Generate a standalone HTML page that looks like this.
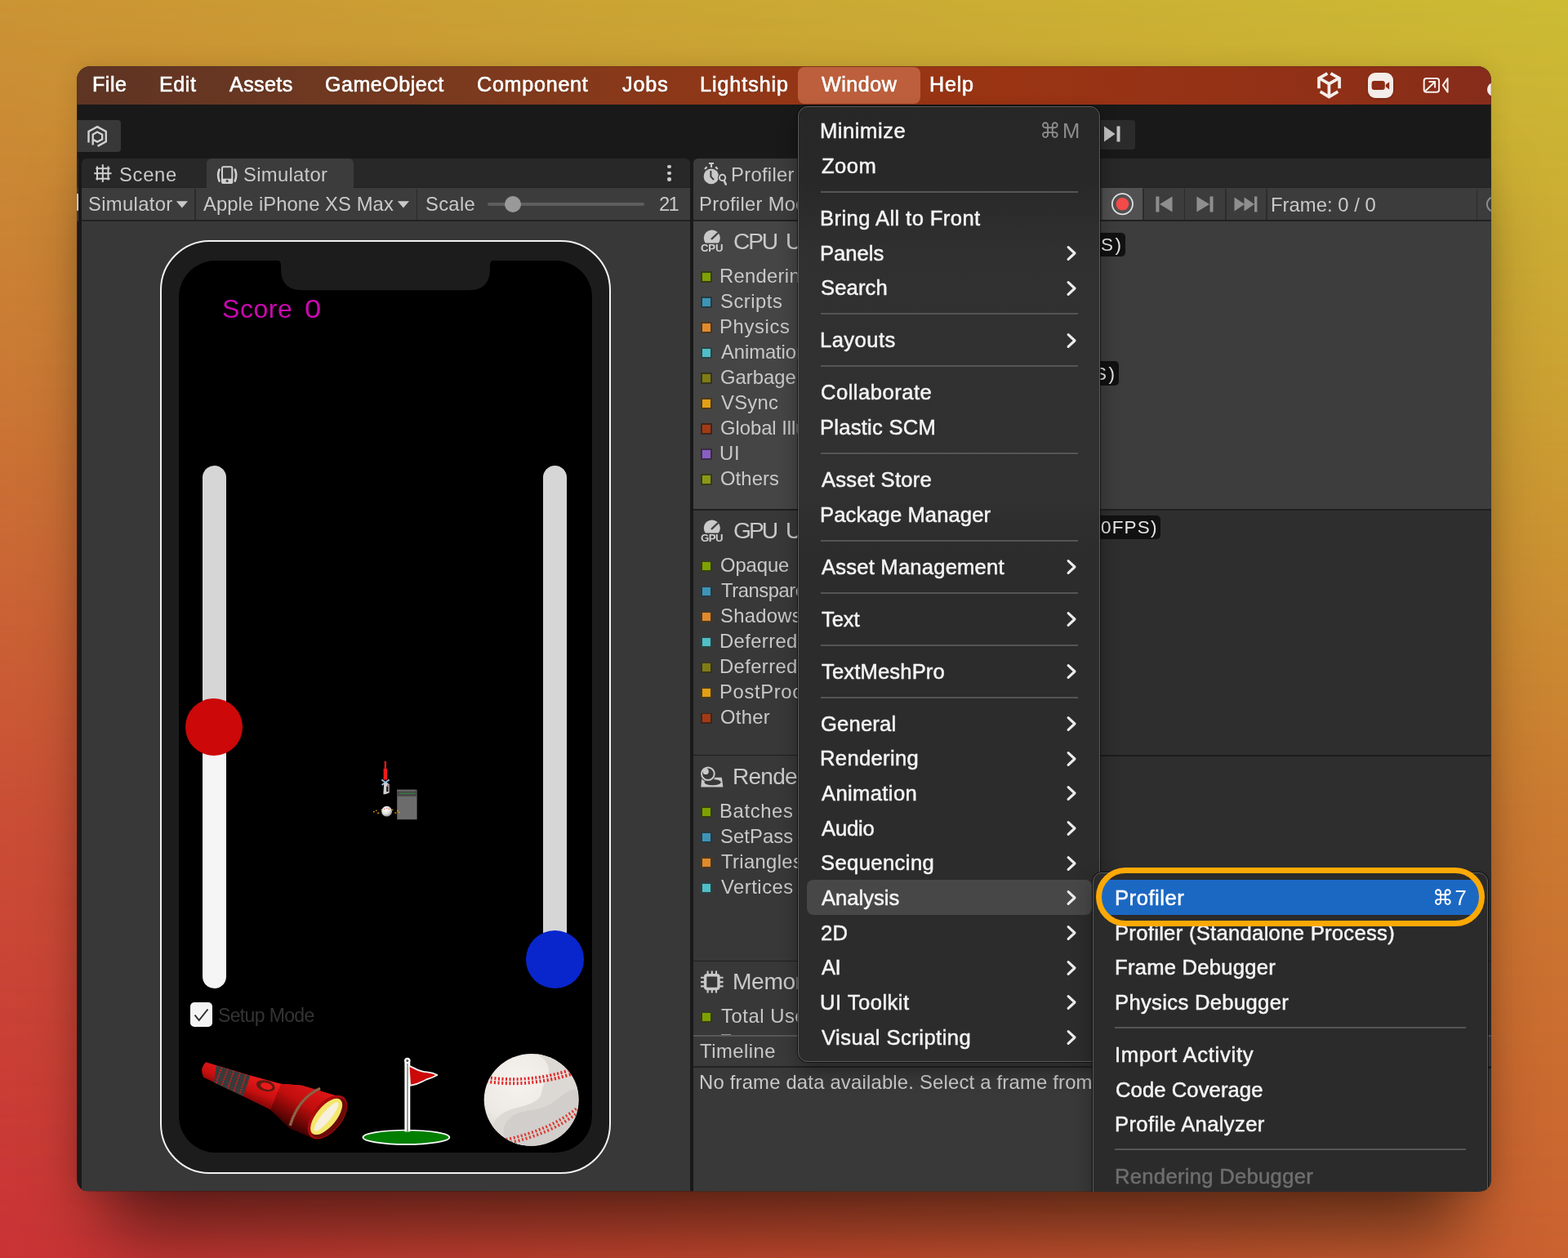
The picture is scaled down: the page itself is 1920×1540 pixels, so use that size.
<!DOCTYPE html>
<html lang="en"><head><meta charset="utf-8"><title>Unity Editor - Window / Analysis / Profiler</title>
<style>
*{box-sizing:border-box;margin:0;padding:0}
html,body{width:1920px;height:1540px;overflow:hidden;background:#c98a32}
body{position:relative;font-family:"Liberation Sans","DejaVu Sans",sans-serif}
body div,body span,body svg{position:absolute}
.t{white-space:pre;display:block;will-change:transform}
#bgA{left:0;top:0;width:1920px;height:1540px;background:linear-gradient(90deg,#cb9434 0%,#caa534 40%,#ccbc34 100%)}
#bgB{left:0;top:0;width:1920px;height:1540px;background:linear-gradient(90deg,#c93236 0%,#c8482f 45%,#ca6130 100%);-webkit-mask-image:linear-gradient(180deg,rgba(0,0,0,0) 0%,rgba(0,0,0,.28) 30%,rgba(0,0,0,.72) 65%,#000 100%);mask-image:linear-gradient(180deg,rgba(0,0,0,0) 0%,rgba(0,0,0,.28) 30%,rgba(0,0,0,.72) 65%,#000 100%)}
#shadow{left:95px;top:82px;width:1730px;height:1376px;border-radius:16px;box-shadow:0 0 30px rgba(0,0,0,.12),0 0 0 1px rgba(0,0,0,.18)}
#shadowK{left:128px;top:181px;width:1664px;height:1277px;border-radius:16px;box-shadow:0 50px 90px rgba(0,0,0,.54)}
#win{left:0;top:0;width:1920px;height:1540px;clip-path:inset(81.3px 94.2px 81.4px 94.2px round 16px 16px 14px 14px)}
.mi{-webkit-text-stroke:0.5px currentColor}
.mb{-webkit-text-stroke:0.65px #fff;text-shadow:0 1px 2px rgba(0,0,0,.25)}

</style></head>
<body>
<div id="bgA"></div><div id="bgB"></div><div id="shadowK"></div><div id="shadow"></div>
<div id="win">
<div style="left:94px;top:81px;width:1732px;height:1377px;background:#191919;"></div>
<div style="left:94px;top:81px;width:1732px;height:47px;background:linear-gradient(90deg,#5e3423 0%,#693722 12%,#783a1f 25%,#88391a 38%,#933616 50%,#9a3413 65%,#953216 80%,#8d2f17 92%,#862c1b 100%);"></div>
<div style="left:977.4px;top:82px;width:149.5px;height:45.2px;background:#bd5f3c;border-radius:8px"></div>
<span id="t0" class="t mb" style="left:112.6px;top:85.6px;line-height:35px;font-size:25.1px;color:#fff;letter-spacing:0.541px;">File</span>
<span id="t1" class="t mb" style="left:194.5px;top:85.6px;line-height:35px;font-size:25.1px;color:#fff;letter-spacing:0.544px;">Edit</span>
<span id="t2" class="t mb" style="left:281.3px;top:85.6px;line-height:35px;font-size:25.1px;color:#fff;letter-spacing:0.388px;">Assets</span>
<span id="t3" class="t mb" style="left:398px;top:85.6px;line-height:35px;font-size:25.1px;color:#fff;letter-spacing:0.49px;">GameObject</span>
<span id="t4" class="t mb" style="left:583.9px;top:85.6px;line-height:35px;font-size:25.1px;color:#fff;letter-spacing:0.755px;">Component</span>
<span id="t5" class="t mb" style="left:761.8px;top:85.6px;line-height:35px;font-size:25.1px;color:#fff;letter-spacing:0.914px;">Jobs</span>
<span id="t6" class="t mb" style="left:856.6px;top:85.6px;line-height:35px;font-size:25.1px;color:#fff;letter-spacing:0.951px;">Lightship</span>
<span id="t7" class="t mb" style="left:1005.8px;top:85.6px;line-height:35px;font-size:25.1px;color:#fff;letter-spacing:0.514px;">Window</span>
<span id="t8" class="t mb" style="left:1138px;top:85.6px;line-height:35px;font-size:25.1px;color:#fff;letter-spacing:0.782px;">Help</span>
<svg style="left:1608px;top:84px" width="40" height="42" viewBox="1608 84 40 42"><g fill="none" stroke="#f4eeea" stroke-width="3.7" stroke-linejoin="miter"><path d="M1625.4 89.9L1615 95.9V108.2"/><path d="M1629.4 89.9L1640.1 95.9V108.2"/><path d="M1615.6 95.9L1627.4 102.7L1639.3 95.9M1627.4 102.7V118.5"/><path d="M1616.6 112.2L1627.4 118.6L1638.3 112.2"/></g></svg>
<div style="left:1675px;top:89px;width:31px;height:31px;background:#f3ece8;border-radius:9px;box-shadow:0 1px 3px rgba(0,0,0,.25)"></div>
<svg style="left:1675px;top:89px" width="31" height="31" viewBox="1675 89 31 31"><rect x="1679.6" y="99" width="16.2" height="11.1" rx="3" fill="#8b2b18"/><path d="M1696.8 103.4l4.4-3.2v9.2l-4.4-3.2z" fill="#8b2b18"/></svg>
<svg style="left:1740px;top:92px" width="38" height="26" viewBox="1740 92 38 26"><g fill="none" stroke="#f6f0ec" stroke-width="2"><rect x="1743.7" y="96" width="18.4" height="16.8" rx="3"/><path d="M1766.8 104.4l5.8-8.4v16.8z" stroke-linejoin="round"/><path d="M1745.2 111.5l11.5-11M1749.5 100h7.6v7.6"/></g></svg>
<div style="left:1821.3px;top:100.5px;width:17.0px;height:17.0px;background:#f4eeea;border-radius:50%"></div>
<div style="left:94px;top:147px;width:54px;height:38.8px;background:#383838;border-radius:0 4px 4px 0"></div>
<svg style="left:104px;top:151px" width="32" height="32" viewBox="104 151 32 32"><g fill="none" stroke="#d2d2d2" stroke-width="2.4" stroke-linejoin="miter"><path d="M108.5 174.4V160.9L119.1 155.1L129.8 160.9V173.3L119.6 178.9"/><path d="M113.7 177.4V164.6L119.1 161.5L125.2 164.8V170.6L119.1 173.6L114.2 171"/></g></svg>
<div style="left:1300px;top:147px;width:90px;height:36px;background:#2b2b2b;border-radius:0 4px 4px 0"></div>
<div style="left:94px;top:193.7px;width:2.3px;height:36.0px;background:#2a2a2a;"></div>
<div style="left:94px;top:229.7px;width:2.3px;height:41.3px;background:#3c3c3c;"></div>
<div style="left:94px;top:237px;width:1.6px;height:20.5px;background:#d8d8d8;border-radius:0 1px 1px 0"></div>
<div style="left:99.8px;top:193.7px;width:745.2px;height:37.3px;background:#282828;border-radius:6px 6px 0 0"></div>
<div style="left:252.5px;top:193.7px;width:180.5px;height:38.3px;background:#3c3c3c;border-radius:6px 6px 0 0"></div>
<div style="left:99.8px;top:229.7px;width:745.2px;height:39.1px;background:#3c3c3c;"></div>
<div style="left:99.8px;top:268.8px;width:745.2px;height:2.2px;background:#222;"></div>
<div style="left:99.8px;top:271px;width:745.2px;height:1187px;background:#383838;"></div>
<div style="left:99.8px;top:229px;width:152.7px;height:1px;background:#222;"></div>
<div style="left:433px;top:229px;width:412px;height:1px;background:#222;"></div>
<div style="left:238.2px;top:231px;width:1.8px;height:37.5px;background:#2b2b2b;"></div>
<div style="left:509.6px;top:231px;width:1.8px;height:37.5px;background:#2b2b2b;"></div>
<span id="t9" class="t" style="left:146.3px;top:197.0px;line-height:33px;font-size:23.8px;color:#c9c9c9;letter-spacing:0.69px;">Scene</span>
<span id="t10" class="t" style="left:297.6px;top:197.0px;line-height:33px;font-size:23.8px;color:#c9c9c9;letter-spacing:0.314px;">Simulator</span>
<span id="t11" class="t" style="left:107.6px;top:233.1px;line-height:33px;font-size:23.8px;color:#c9c9c9;letter-spacing:0.339px;">Simulator</span>
<span id="t12" class="t" style="left:248.7px;top:233.1px;line-height:33px;font-size:23.8px;color:#c9c9c9;letter-spacing:0.072px;">Apple iPhone XS Max</span>
<span id="t13" class="t" style="left:521px;top:233.1px;line-height:33px;font-size:23.8px;color:#c9c9c9;letter-spacing:0.302px;">Scale</span>
<span id="t14" class="t" style="left:806.5px;top:233.1px;line-height:33px;font-size:23.8px;color:#c9c9c9;letter-spacing:-1.735px;">21</span>
<svg style="left:113px;top:199px" width="26" height="26" viewBox="113 199 26 26"><g stroke="#d0d0d0" stroke-width="2" fill="none"><path d="M119 203.5V220.5M125.8 201.3V222.9M132.5 203.5V220.5M117.3 206.3H134.5M115.3 212.2H136.5M117.3 218.8H134.5"/></g></svg>
<svg style="left:263px;top:201px" width="30" height="26" viewBox="263 201 30 26"><g fill="none" stroke="#d0d0d0" stroke-width="2"><rect x="272" y="204.3" width="12.3" height="19.8" rx="1.6"/><path d="M268.6 207.6q-3 6.8 0 14M287.7 207.6q3 6.8 0 14" stroke-width="2.6" stroke-linecap="round"/></g><rect x="272" y="218.7" width="12.3" height="5.4" fill="#d0d0d0"/><circle cx="278.1" cy="221.5" r="1.5" fill="#3c3c3c"/></svg>
<svg style="left:215px;top:245px" width="16" height="11" viewBox="0 0 16 11"><path d="M0.8 1.3h14.2l-7.1 8.3z" fill="#c9c9c9"/></svg>
<svg style="left:486px;top:245px" width="16" height="11" viewBox="0 0 16 11"><path d="M0.8 1.3h14.2l-7.1 8.3z" fill="#c9c9c9"/></svg>
<div style="left:597px;top:248px;width:192px;height:3.5px;background:#5e5e5e;border-radius:2px"></div>
<div style="left:617.5px;top:239.5px;width:20.0px;height:20.0px;background:#999;border-radius:50%"></div>
<div style="left:817.3px;top:201.60000000000002px;width:4.4px;height:4.4px;background:#c9c9c9;border-radius:50%"></div>
<div style="left:817.3px;top:209.5px;width:4.4px;height:4.4px;background:#c9c9c9;border-radius:50%"></div>
<div style="left:817.3px;top:217.3px;width:4.4px;height:4.4px;background:#c9c9c9;border-radius:50%"></div>
<div style="left:195.5px;top:294.4px;width:552.7px;height:1142.4px;background:#1c1c1c;border:2px solid #f2f2f2;border-radius:61px"></div>
<div style="left:219px;top:318.6px;width:505.6px;height:1092.9px;background:#000;border-radius:45px"></div>
<svg style="left:330px;top:316px" width="284" height="42" viewBox="330 316 284 42"><path fill="#1c1c1c" d="M330 316H614V318.6H606Q600 318.6 600 324.6V329.3Q600 355.3 574 355.3H370Q344 355.3 344 329.3V324.6Q344 318.6 338 318.6H330Z"/></svg>
<span id="t15" class="t" style="left:271.6px;top:355.8px;line-height:45px;font-size:32px;color:#cc08b0;letter-spacing:0.551px;">Score</span>
<span id="t16" class="t" style="left:372.8px;top:355.8px;line-height:45px;font-size:32px;color:#cc08b0;transform:scaleX(1.14);transform-origin:0 50%;">0</span>
<div style="left:247.5px;top:570px;width:29.0px;height:640px;background:linear-gradient(180deg,#d6d6d6 0,#d6d6d6 320px,#f5f5f5 320px,#f5f5f5 100%);border-radius:15px"></div>
<div style="left:664.5px;top:570px;width:29.0px;height:620px;background:#d6d6d6;border-radius:15px 15px 0 0"></div>
<div style="left:227px;top:854.6px;width:70px;height:70.3px;background:#cc0808;border-radius:50%"></div>
<div style="left:644.4px;top:1139.3px;width:70.6px;height:70.6px;background:#0826cc;border-radius:50%"></div>
<div style="left:233px;top:1227.3px;width:26.5px;height:30.2px;background:#f4f4f4;border-radius:5px"></div>
<svg style="left:233px;top:1227px" width="27" height="31" viewBox="0 0 27 31"><path d="M5.5 15.5l5.2 6.5L21.5 8.5" fill="none" stroke="#2c2c2c" stroke-width="2"/></svg>
<span id="t17" class="t" style="left:266.5px;top:1227.0px;line-height:32px;font-size:23px;color:#343434;letter-spacing:-0.638px;">Setup Mode</span>
<svg style="left:450px;top:925px" width="70" height="85" viewBox="450 925 70 85">
<defs><radialGradient id="gb" cx="40%" cy="35%" r="70%"><stop offset="0" stop-color="#fff"/><stop offset=".6" stop-color="#ddd"/><stop offset="1" stop-color="#888"/></radialGradient></defs>
<rect x="470.7" y="931.8" width="2.3" height="10" fill="#f01a1a"/><rect x="469.6" y="941" width="4.5" height="13.6" fill="#f01a1a"/>
<path d="M467.4 954.6l9 6.4M476.6 954.6l-9 6.4" stroke="#9cc0e4" stroke-width="1.8"/>
<path d="M470.2 958.5h3.4l3 2.6v9.5l-4.6 1.6h-2.6z" fill="#cfcfcf"/><rect x="473.2" y="962.6" width="2.2" height="6.6" fill="#141414"/><rect x="474.2" y="960.6" width="1.6" height="1.4" fill="#d02020"/>
<rect x="486.2" y="966.8" width="24.4" height="36.4" fill="#6c6c6c"/><rect x="486.2" y="966.8" width="24.4" height="8" fill="#484848"/><rect x="486.2" y="966.8" width="22.6" height="1.8" fill="#6a6a6a"/>
<path d="M489.5 971.4h19" stroke="#2c9c3c" stroke-width="1.3" stroke-dasharray="1.3 0.75"/>
<circle cx="473.6" cy="993.2" r="6.4" fill="url(#gb)"/>
<path d="M470.2 990.4h1.2M473 989.4h1.2M475.6 990.2h1.2" stroke="#e04040" stroke-width="1"/>
<g fill="#e8a400"><rect x="457" y="993" width="1.6" height="1.4"/><rect x="460" y="991.6" width="1.4" height="1.4"/><rect x="462.2" y="994.6" width="2" height="1.4"/><rect x="466.6" y="990.6" width="1.4" height="1.4"/><rect x="479.6" y="990.8" width="1.8" height="1.2"/><rect x="483.4" y="994.4" width="2" height="1.4"/><rect x="486" y="991.8" width="1.6" height="1.4"/><rect x="488" y="993.8" width="1.4" height="1.4"/></g>
</svg>
<svg style="left:220px;top:1200px" width="280" height="230" viewBox="0 0 1875 1540">
<defs><linearGradient id="fl" gradientUnits="userSpaceOnUse" x1="760" y1="720" x2="610" y2="1080"><stop offset="0" stop-color="#ff3a3a"/><stop offset=".25" stop-color="#ee1c1c"/><stop offset=".6" stop-color="#c80f0f"/><stop offset=".85" stop-color="#7a0606"/><stop offset="1" stop-color="#3a0202"/></linearGradient>
<linearGradient id="fh" gradientUnits="userSpaceOnUse" x1="1180" y1="880" x2="960" y2="1260"><stop offset="0" stop-color="#e21616"/><stop offset=".45" stop-color="#c00e0e"/><stop offset=".8" stop-color="#6a0505"/><stop offset="1" stop-color="#2c0101"/></linearGradient></defs>
<path d="M215 672L560 775L830 848L1000 862L1335 962L1090 1292L900 1212L795 1108L745 1062L520 950L195 795Q160 722 215 672Z" fill="url(#fl)"/>
<path d="M830 848L1000 862L1335 962L1090 1292L900 1212L795 1108L745 1062Z" fill="url(#fh)"/>
<path d="M300 698L578 781L522 951L282 838Z" fill="#3a3a3a"/>
<g stroke="#e01a1a" stroke-width="11" stroke-dasharray="13 8"><path d="M345 712L298 846M395 727L343 868M445 742L393 890M495 757L443 912M545 772L493 934"/></g>
<ellipse cx="705" cy="865" rx="78" ry="44" transform="rotate(14 705 865)" fill="#5c1c12"/><ellipse cx="712" cy="868" rx="50" ry="27" transform="rotate(14 712 868)" fill="#ea1a1a"/>
<path d="M1152 887Q975 965 905 1192" fill="none" stroke="#87563a" stroke-width="24"/><path d="M1152 887Q975 965 905 1192" fill="none" stroke="#a88a78" stroke-width="6" stroke-dasharray="14 10"/>
<ellipse cx="1212" cy="1122" rx="212" ry="118" transform="rotate(-50.5 1212 1122)" fill="#a80c0c"/>
<ellipse cx="1222" cy="1128" rx="196" ry="100" transform="rotate(-50.5 1222 1128)" fill="#6a0a08"/>
<ellipse cx="1203" cy="1118" rx="180" ry="82" transform="rotate(-50.5 1203 1118)" fill="#f5e76c"/>
<ellipse cx="1203" cy="1118" rx="150" ry="38" transform="rotate(-50.5 1203 1118)" fill="#f6f0dc"/>
</svg>
<svg style="left:438px;top:1288px" width="120" height="118" viewBox="438 1288 120 118">
<ellipse cx="497.4" cy="1392.2" rx="53" ry="8.7" fill="#007e00" stroke="#fff" stroke-width="1.7"/>
<rect x="495.4" y="1297" width="6.9" height="88.4" fill="#fff"/><rect x="498.1" y="1300" width="1.7" height="85" fill="#8c8c8c"/>
<circle cx="498.8" cy="1298.3" r="3.6" fill="#fff"/><circle cx="498.8" cy="1298.6" r="1.5" fill="#555"/>
<path d="M500.6 1304.6C504 1305.5 508.5 1309.6 517.5 1311.7C523 1313 528 1311.8 535.4 1316C528 1320.3 524.5 1320.4 520.6 1322.2C516 1324.4 513.5 1327.2 502.2 1328.8Z" fill="#cc0808" stroke="#f4f4f4" stroke-width="1.8" stroke-linejoin="round"/>
</svg>
<svg style="left:588px;top:1284px" width="126" height="124" viewBox="588 1284 126 124">
<defs><radialGradient id="bb" cx="36%" cy="30%" r="78%"><stop offset="0" stop-color="#f6f2ee"/><stop offset=".55" stop-color="#ece8e4"/><stop offset=".85" stop-color="#d6d2ce"/><stop offset="1" stop-color="#bdb8b4"/></radialGradient><clipPath id="bc"><ellipse cx="650.7" cy="1346.3" rx="58" ry="56.4"/></clipPath></defs>
<ellipse cx="650.7" cy="1346.3" rx="58" ry="56.4" fill="url(#bb)"/>
<g clip-path="url(#bc)">
<path d="M656 1290C672 1296 676 1312 668 1324C660 1336 668 1342 652 1350C634 1358 618 1356 606 1372C600 1380 603 1392 610 1398C640 1415 690 1400 706 1366C712 1340 706 1306 690 1296C680 1290 666 1288 656 1290Z" fill="#dcd8d4"/>
<path d="M625 1368C640 1356 660 1362 676 1350C690 1340 700 1330 708 1336L706 1372C690 1396 660 1408 628 1400C612 1392 614 1378 625 1368Z" fill="#d2cecb"/>
<path d="M596 1321.5Q649 1329 702 1311.5" fill="none" stroke="#e22424" stroke-width="9" stroke-dasharray="2 2.6"/>
<path d="M596 1321.5Q649 1329 702 1311.5" fill="none" stroke="#ece8e4" stroke-width="1.2"/>
<path d="M620 1397.5Q674 1386 707.5 1359" fill="none" stroke="#d83a30" stroke-width="8.6" stroke-dasharray="2 2.7"/>
<path d="M620 1397.5Q674 1386 707.5 1359" fill="none" stroke="#d6d2ce" stroke-width="1.2"/>
</g></svg>
<div style="left:848.7px;top:193.7px;width:977.3px;height:37.3px;background:#282828;border-radius:6px 0 0 0"></div>
<div style="left:848.7px;top:193.7px;width:251.3px;height:38.3px;background:#3c3c3c;border-radius:6px 6px 0 0"></div>
<div style="left:848.7px;top:229.7px;width:977.3px;height:39.1px;background:#3c3c3c;"></div>
<div style="left:1100px;top:229px;width:726px;height:1px;background:#222;"></div>
<div style="left:848.7px;top:268.8px;width:977.3px;height:2.2px;background:#212121;"></div>
<div style="left:848.7px;top:271px;width:498.3px;height:352px;background:#454545;"></div>
<div style="left:848.7px;top:623px;width:498.3px;height:835px;background:#383838;"></div>
<span id="t18" class="t" style="left:894.5px;top:197.0px;line-height:33px;font-size:23.8px;color:#c9c9c9;letter-spacing:0.293px;">Profiler</span>
<span id="t19" class="t" style="left:855.8px;top:233.3px;line-height:33px;font-size:23.8px;color:#c9c9c9;letter-spacing:0.3px;">Profiler Modules</span>
<svg style="left:859px;top:197px" width="34" height="32" viewBox="859 197 34 32"><circle cx="870.9" cy="215.9" r="9.3" fill="#c9c9c9"/><path d="M868 200h6M871 200v5M863 207l2.6-2.6M878.8 207l-2.6-2.6" stroke="#c9c9c9" stroke-width="2.2" fill="none"/><path d="M870.4 209v7.2l3.6 4" stroke="#3c3c3c" stroke-width="2" fill="none"/><circle cx="884.6" cy="217.4" r="5.6" fill="#3c3c3c"/><circle cx="884.6" cy="217.4" r="3.6" fill="#3c3c3c" stroke="#c9c9c9" stroke-width="2"/><path d="M886.6 221l2.2 4.6" stroke="#c9c9c9" stroke-width="2.6" stroke-linecap="round"/></svg>
<div style="left:1347px;top:271px;width:479px;height:352px;background:#3d3d3d;"></div>
<div style="left:848.7px;top:623px;width:977.3px;height:1.8px;background:#1f1f1f;"></div>
<div style="left:1347px;top:624.8px;width:479px;height:298.8px;background:#2e2e2e;"></div>
<div style="left:848.7px;top:923.6px;width:977.3px;height:1.9px;background:#1f1f1f;"></div>
<div style="left:1347px;top:925.5px;width:479px;height:250.0px;background:#2e2e2e;"></div>
<div style="left:848.7px;top:1175.5px;width:977.3px;height:1.8px;background:#1f1f1f;"></div>
<div style="left:1347px;top:1177.3px;width:479px;height:89.7px;background:#2e2e2e;"></div>
<div style="left:848.7px;top:1267.1px;width:977.3px;height:1.8px;background:#575757;"></div>
<div style="left:848.7px;top:1268.9px;width:977.3px;height:36.5px;background:#3a3a3a;"></div>
<div style="left:848.7px;top:1305.4px;width:977.3px;height:2.1px;background:#222;"></div>
<div style="left:848.7px;top:1307.5px;width:977.3px;height:151.3px;background:#393939;"></div>
<span id="t20" class="t" style="left:857.2px;top:1270.0px;line-height:33px;font-size:23.8px;color:#c9c9c9;letter-spacing:0.485px;">Timeline</span>
<span id="t21" class="t" style="left:855.8px;top:1307.9px;line-height:33px;font-size:23.8px;color:#c9c9c9;letter-spacing:0.215px;">No frame data available. Select a frame from</span>
<span id="t22" class="t" style="left:898.2px;top:275.7px;line-height:39px;font-size:28.2px;color:#c9c9c9;letter-spacing:-2.178px;">CPU</span>
<span id="t23" class="t" style="left:961.6px;top:275.7px;line-height:39px;font-size:28.2px;color:#c9c9c9;letter-spacing:-0.8px;">Usage</span>
<div style="left:858.1px;top:332.2px;width:13.7px;height:13.6px;background:#363c16;"></div>
<div style="left:859.8px;top:333.8px;width:10.4px;height:10.4px;background:#7ea100;"></div>
<span id="t24" class="t" style="left:881px;top:321.1px;line-height:33px;font-size:23.8px;color:#c9c9c9;letter-spacing:0.3px;">Rendering</span>
<div style="left:858.1px;top:363.2px;width:13.7px;height:13.6px;background:#28393f;"></div>
<div style="left:859.8px;top:364.8px;width:10.4px;height:10.4px;background:#3d94b8;"></div>
<span id="t25" class="t" style="left:882px;top:352.1px;line-height:33px;font-size:23.8px;color:#c9c9c9;letter-spacing:0.529px;">Scripts</span>
<div style="left:858.1px;top:394.2px;width:13.7px;height:13.6px;background:#4c3720;"></div>
<div style="left:859.8px;top:395.8px;width:10.4px;height:10.4px;background:#e08a2c;"></div>
<span id="t26" class="t" style="left:881px;top:383.1px;line-height:33px;font-size:23.8px;color:#c9c9c9;letter-spacing:0.652px;">Physics</span>
<div style="left:858.1px;top:425.2px;width:13.7px;height:13.6px;background:#2c4242;"></div>
<div style="left:859.8px;top:426.8px;width:10.4px;height:10.4px;background:#4fbfc8;"></div>
<span id="t27" class="t" style="left:883px;top:414.1px;line-height:33px;font-size:23.8px;color:#c9c9c9;letter-spacing:-0.079px;">Animation</span>
<div style="left:858.1px;top:456.2px;width:13.7px;height:13.6px;background:#36341b;"></div>
<div style="left:859.8px;top:457.8px;width:10.4px;height:10.4px;background:#7f7d14;"></div>
<span id="t28" class="t" style="left:882px;top:445.1px;line-height:33px;font-size:23.8px;color:#c9c9c9;letter-spacing:0.004px;">Garbage Collector</span>
<div style="left:858.1px;top:487.2px;width:13.7px;height:13.6px;background:#4c3b1b;"></div>
<div style="left:859.8px;top:488.8px;width:10.4px;height:10.4px;background:#e2a014;"></div>
<span id="t29" class="t" style="left:883px;top:476.1px;line-height:33px;font-size:23.8px;color:#c9c9c9;letter-spacing:0.281px;">VSync</span>
<div style="left:858.1px;top:518.2px;width:13.7px;height:13.6px;background:#3e251b;"></div>
<div style="left:859.8px;top:519.8px;width:10.4px;height:10.4px;background:#a33a14;"></div>
<span id="t30" class="t" style="left:882px;top:507.1px;line-height:33px;font-size:23.8px;color:#c9c9c9;letter-spacing:-0.033px;">Global Illumination</span>
<div style="left:858.1px;top:549.2px;width:13.7px;height:13.6px;background:#392d41;"></div>
<div style="left:859.8px;top:550.8px;width:10.4px;height:10.4px;background:#8a5fc4;"></div>
<span id="t31" class="t" style="left:881px;top:538.1px;line-height:33px;font-size:23.8px;color:#c9c9c9;letter-spacing:0.815px;">UI</span>
<div style="left:858.1px;top:580.2px;width:13.7px;height:13.6px;background:#393a1b;"></div>
<div style="left:859.8px;top:581.8px;width:10.4px;height:10.4px;background:#8a9a14;"></div>
<span id="t32" class="t" style="left:882px;top:569.1px;line-height:33px;font-size:23.8px;color:#c9c9c9;letter-spacing:0.097px;">Others</span>
<span id="t33" class="t" style="left:898.2px;top:630.2px;line-height:39px;font-size:28.2px;color:#c9c9c9;letter-spacing:-2.963px;">GPU</span>
<span id="t34" class="t" style="left:961.6px;top:630.2px;line-height:39px;font-size:28.2px;color:#c9c9c9;letter-spacing:-0.8px;">Usage</span>
<div style="left:858.1px;top:686.5px;width:13.7px;height:13.6px;background:#363c16;"></div>
<div style="left:859.8px;top:688.0999999999999px;width:10.4px;height:10.4px;background:#7ea100;"></div>
<span id="t35" class="t" style="left:882px;top:675.4px;line-height:33px;font-size:23.8px;color:#c9c9c9;letter-spacing:-0.07px;">Opaque</span>
<div style="left:858.1px;top:717.5px;width:13.7px;height:13.6px;background:#28393f;"></div>
<div style="left:859.8px;top:719.0999999999999px;width:10.4px;height:10.4px;background:#3d94b8;"></div>
<span id="t36" class="t" style="left:883px;top:706.4px;line-height:33px;font-size:23.8px;color:#c9c9c9;letter-spacing:-0.447px;">Transparent</span>
<div style="left:858.1px;top:748.5px;width:13.7px;height:13.6px;background:#4c3720;"></div>
<div style="left:859.8px;top:750.0999999999999px;width:10.4px;height:10.4px;background:#e08a2c;"></div>
<span id="t37" class="t" style="left:882px;top:737.4px;line-height:33px;font-size:23.8px;color:#c9c9c9;letter-spacing:0.298px;">Shadows/Depth</span>
<div style="left:858.1px;top:779.5px;width:13.7px;height:13.6px;background:#2c4242;"></div>
<div style="left:859.8px;top:781.0999999999999px;width:10.4px;height:10.4px;background:#4fbfc8;"></div>
<span id="t38" class="t" style="left:881px;top:768.4px;line-height:33px;font-size:23.8px;color:#c9c9c9;letter-spacing:0.393px;">Deferred PrePass</span>
<div style="left:858.1px;top:810.5px;width:13.7px;height:13.6px;background:#36341b;"></div>
<div style="left:859.8px;top:812.0999999999999px;width:10.4px;height:10.4px;background:#7f7d14;"></div>
<span id="t39" class="t" style="left:881px;top:799.4px;line-height:33px;font-size:23.8px;color:#c9c9c9;letter-spacing:0.393px;">Deferred Lighting</span>
<div style="left:858.1px;top:841.5px;width:13.7px;height:13.6px;background:#4c3b1b;"></div>
<div style="left:859.8px;top:843.0999999999999px;width:10.4px;height:10.4px;background:#e2a014;"></div>
<span id="t40" class="t" style="left:881px;top:830.4px;line-height:33px;font-size:23.8px;color:#c9c9c9;letter-spacing:0.648px;">PostProcess</span>
<div style="left:858.1px;top:872.5px;width:13.7px;height:13.6px;background:#3e251b;"></div>
<div style="left:859.8px;top:874.0999999999999px;width:10.4px;height:10.4px;background:#a33a14;"></div>
<span id="t41" class="t" style="left:882px;top:861.4px;line-height:33px;font-size:23.8px;color:#c9c9c9;letter-spacing:0.277px;">Other</span>
<span id="t42" class="t" style="left:897.2px;top:930.5px;line-height:39px;font-size:28.2px;color:#c9c9c9;letter-spacing:-0.836px;">Rendering</span>
<div style="left:858.1px;top:987.0px;width:13.7px;height:13.6px;background:#363c16;"></div>
<div style="left:859.8px;top:988.5999999999999px;width:10.4px;height:10.4px;background:#7ea100;"></div>
<span id="t43" class="t" style="left:881px;top:975.9px;line-height:33px;font-size:23.8px;color:#c9c9c9;letter-spacing:0.652px;">Batches</span>
<div style="left:858.1px;top:1018.0px;width:13.7px;height:13.6px;background:#28393f;"></div>
<div style="left:859.8px;top:1019.5999999999999px;width:10.4px;height:10.4px;background:#3d94b8;"></div>
<span id="t44" class="t" style="left:882px;top:1006.9px;line-height:33px;font-size:23.8px;color:#c9c9c9;letter-spacing:0.096px;">SetPass Calls</span>
<div style="left:858.1px;top:1049.0000000000002px;width:13.7px;height:13.6px;background:#4c3720;"></div>
<div style="left:859.8px;top:1050.6000000000001px;width:10.4px;height:10.4px;background:#e08a2c;"></div>
<span id="t45" class="t" style="left:883px;top:1037.9px;line-height:33px;font-size:23.8px;color:#c9c9c9;letter-spacing:0.349px;">Triangles</span>
<div style="left:858.1px;top:1080.0000000000002px;width:13.7px;height:13.6px;background:#2c4242;"></div>
<div style="left:859.8px;top:1081.6000000000001px;width:10.4px;height:10.4px;background:#4fbfc8;"></div>
<span id="t46" class="t" style="left:883px;top:1068.9px;line-height:33px;font-size:23.8px;color:#c9c9c9;letter-spacing:0.507px;">Vertices</span>
<span id="t47" class="t" style="left:897.2px;top:1182.4px;line-height:39px;font-size:28.2px;color:#c9c9c9;letter-spacing:-0.379px;">Memory</span>
<div style="left:858.1px;top:1238.5000000000002px;width:13.7px;height:13.6px;background:#363c16;"></div>
<div style="left:859.8px;top:1240.1000000000001px;width:10.4px;height:10.4px;background:#7ea100;"></div>
<span id="t48" class="t" style="left:883px;top:1227.4px;line-height:33px;font-size:23.8px;color:#c9c9c9;letter-spacing:0.548px;">Total Used Memory</span>
<svg style="left:856px;top:279.2px" width="32" height="32" viewBox="856 -16 32 32"><path d="M863.9 2.6A10 10 0 1 1 879.7 2.6Z" fill="#c9c9c9"/><path d="M871.6 -2.7L879 -9.6" stroke="#454545" stroke-width="2.4" stroke-linecap="round"/></svg>
<span id="t49" class="t" style="left:858.3px;top:295.1px;line-height:18px;font-size:13.2px;color:#d0d0d0;letter-spacing:-0.16px;font-weight:700;">CPU</span>
<svg style="left:856px;top:633.7px" width="32" height="32" viewBox="856 -16 32 32"><path d="M863.9 2.6A10 10 0 1 1 879.7 2.6Z" fill="#c9c9c9"/><path d="M871.6 -2.7L879 -9.6" stroke="#454545" stroke-width="2.4" stroke-linecap="round"/></svg>
<span id="t50" class="t" style="left:858.3px;top:649.6px;line-height:18px;font-size:13.2px;color:#d0d0d0;letter-spacing:-0.527px;font-weight:700;">GPU</span>
<svg style="left:856px;top:934px" width="32" height="32" viewBox="856 934 32 32"><path d="M858.3 963.6L859.3 951.8H883.8L885.4 963.6Z" fill="#c9c9c9"/><ellipse cx="872.6" cy="957.6" rx="10.2" ry="3.7" fill="#383838"/><circle cx="866.9" cy="947.3" r="9.8" fill="#383838"/><circle cx="866.9" cy="947.3" r="7.8" fill="#383838" stroke="#c9c9c9" stroke-width="2"/><path d="M860.6 946.2A6 6 0 0 1 866 940.8A4.6 4.6 0 0 1 860.6 946.2Z" fill="#c9c9c9" transform="translate(0.4 0.6)"/><circle cx="864.2" cy="944.4" r="3.6" fill="#c9c9c9"/></svg>
<svg style="left:856px;top:1186px" width="32" height="32" viewBox="856 1186 32 32"><rect x="863.6" y="1193.7" width="16.4" height="16.8" rx="2.4" fill="none" stroke="#c9c9c9" stroke-width="3.4"/><path d="M866.6 1188.6v4M871.8 1188.6v4M877 1188.6v4M866.6 1211.6v4M871.8 1211.6v4M877 1211.6v4M858 1196.8h4.4M858 1202.1h4.4M858 1207.4h4.4M881.2 1196.8h4.4M881.2 1202.1h4.4M881.2 1207.4h4.4" stroke="#c9c9c9" stroke-width="2.1"/></svg>
<div style="left:882.7px;top:1265.6px;width:12.3px;height:1.4px;background:#9a9a9a;"></div>
<div style="left:1349.5px;top:229.7px;width:49.5px;height:39.1px;background:#515151;"></div>
<div style="left:1399px;top:230.5px;width:1.5px;height:38.3px;background:#2c2c2c;"></div>
<div style="left:1449.5px;top:230.5px;width:1.5px;height:38.3px;background:#2c2c2c;"></div>
<div style="left:1500px;top:230.5px;width:1.5px;height:38.3px;background:#2c2c2c;"></div>
<div style="left:1550.4px;top:230.5px;width:1.5px;height:38.3px;background:#2c2c2c;"></div>
<div style="left:1807.5px;top:230.5px;width:1.5px;height:38.3px;background:#2c2c2c;"></div>
<svg style="left:1358px;top:233px" width="34" height="34" viewBox="0 0 34 34"><circle cx="16.4" cy="16.7" r="12.6" fill="none" stroke="#e2e2e2" stroke-width="1.8"/><circle cx="16.4" cy="16.7" r="7.8" fill="#f54a4a"/></svg>
<svg style="left:1410px;top:236px" width="140" height="28" viewBox="1410 236 140 28"><path fill="#8e8e8e" d="M1415.4 240.5h4v19h-4zM1435.5 240.5v19l-15.5-9.5zM1465.4 240.5l15.6 9.5-15.6 9.5zM1481.5 240.5h4v19h-4zM1511.5 241.5l12.5 8.5-12.5 8.5zM1523.5 241.5l12.5 8.5-12.5 8.5zM1536 240.5h3.4v19h-3.4z"/></svg>
<span id="t51" class="t" style="left:1555.5px;top:233.5px;line-height:33px;font-size:23.8px;color:#c9c9c9;letter-spacing:0.05px;">Frame: 0 / 0</span>
<svg style="left:1816px;top:238px" width="24" height="24" viewBox="1816 238 24 24"><circle cx="1829.6" cy="250" r="8.8" fill="none" stroke="#8c8c8c" stroke-width="2"/></svg>
<div style="left:1300px;top:284.5px;width:77.5px;height:29.5px;background:#111;border-radius:5px"></div>
<span id="t52" class="t" style="left:1347.5px;top:284.25px;line-height:31px;font-size:22.5px;color:#e4e4e4;letter-spacing:2.493px;">S)</span>
<div style="left:1300px;top:442px;width:69.5px;height:30px;background:#111;border-radius:5px"></div>
<span id="t53" class="t" style="left:1339.5px;top:442.0px;line-height:31px;font-size:22.5px;color:#e4e4e4;letter-spacing:2.493px;">S)</span>
<div style="left:1300px;top:630.5px;width:121px;height:29.5px;background:#111;border-radius:5px"></div>
<span id="t54" class="t" style="left:1348px;top:630.25px;line-height:31px;font-size:22.5px;color:#e4e4e4;letter-spacing:1.182px;">0FPS)</span>
<svg style="left:1348px;top:150px" width="30" height="28" viewBox="1348 150 30 28"><path fill="#c4c4c4" d="M1352 154.5l13.5 9.5-13.5 9.5zM1367.5 154.5h4v19h-4z"/></svg>
<div style="left:977.1px;top:129.8px;width:370.4px;height:1170.0px;background:linear-gradient(180deg,#272727 0px,#282828 90px,#303030 175px,#313131 470px,#2c2c2c 545px,#2c2c2c 100%);border-radius:12px;border:1.5px solid #5b5b5b;box-shadow:0 0 0 1px rgba(0,0,0,.6),0 12px 24px rgba(0,0,0,.32)"></div>
<div style="left:987.5px;top:1077.3px;width:349.5px;height:42.5px;background:#474747;border-radius:8px"></div>
<span id="t55" class="t mi" style="left:1003.5px;top:142.4px;line-height:36px;font-size:25.6px;color:#f4f4f4;letter-spacing:0.539px;">Minimize</span>
<span id="t56" class="t mi" style="left:1005.5px;top:185.07px;line-height:36px;font-size:25.6px;color:#f4f4f4;letter-spacing:0.466px;">Zoom</span>
<span id="t57" class="t mi" style="left:1003.5px;top:249.07px;line-height:36px;font-size:25.6px;color:#f4f4f4;letter-spacing:0.412px;">Bring All to Front</span>
<span id="t58" class="t mi" style="left:1003.5px;top:291.73px;line-height:36px;font-size:25.6px;color:#f4f4f4;letter-spacing:0.008px;">Panels</span>
<svg style="left:1304.3px;top:297.83px" width="16" height="24" viewBox="0 0 16 24"><path d="M4.1 4.6l7.9 7.4L4.1 19.4" fill="none" stroke="#ececec" stroke-width="3.1" stroke-linecap="round" stroke-linejoin="round"/></svg>
<span id="t59" class="t mi" style="left:1004.5px;top:334.4px;line-height:36px;font-size:25.6px;color:#f4f4f4;letter-spacing:0.128px;">Search</span>
<svg style="left:1304.3px;top:340.5px" width="16" height="24" viewBox="0 0 16 24"><path d="M4.1 4.6l7.9 7.4L4.1 19.4" fill="none" stroke="#ececec" stroke-width="3.1" stroke-linecap="round" stroke-linejoin="round"/></svg>
<span id="t60" class="t mi" style="left:1003.5px;top:398.4px;line-height:36px;font-size:25.6px;color:#f4f4f4;letter-spacing:0.443px;">Layouts</span>
<svg style="left:1304.3px;top:404.5px" width="16" height="24" viewBox="0 0 16 24"><path d="M4.1 4.6l7.9 7.4L4.1 19.4" fill="none" stroke="#ececec" stroke-width="3.1" stroke-linecap="round" stroke-linejoin="round"/></svg>
<span id="t61" class="t mi" style="left:1004.5px;top:462.4px;line-height:36px;font-size:25.6px;color:#f4f4f4;letter-spacing:0.484px;">Collaborate</span>
<span id="t62" class="t mi" style="left:1003.5px;top:505.07px;line-height:36px;font-size:25.6px;color:#f4f4f4;letter-spacing:0.245px;">Plastic SCM</span>
<span id="t63" class="t mi" style="left:1005.5px;top:569.07px;line-height:36px;font-size:25.6px;color:#f4f4f4;letter-spacing:0.244px;">Asset Store</span>
<span id="t64" class="t mi" style="left:1003.5px;top:611.74px;line-height:36px;font-size:25.6px;color:#f4f4f4;letter-spacing:0.093px;">Package Manager</span>
<span id="t65" class="t mi" style="left:1005.5px;top:675.74px;line-height:36px;font-size:25.6px;color:#f4f4f4;letter-spacing:0.207px;">Asset Management</span>
<svg style="left:1304.3px;top:681.84px" width="16" height="24" viewBox="0 0 16 24"><path d="M4.1 4.6l7.9 7.4L4.1 19.4" fill="none" stroke="#ececec" stroke-width="3.1" stroke-linecap="round" stroke-linejoin="round"/></svg>
<span id="t66" class="t mi" style="left:1005.5px;top:739.74px;line-height:36px;font-size:25.6px;color:#f4f4f4;letter-spacing:-0.109px;">Text</span>
<svg style="left:1304.3px;top:745.84px" width="16" height="24" viewBox="0 0 16 24"><path d="M4.1 4.6l7.9 7.4L4.1 19.4" fill="none" stroke="#ececec" stroke-width="3.1" stroke-linecap="round" stroke-linejoin="round"/></svg>
<span id="t67" class="t mi" style="left:1005.5px;top:803.74px;line-height:36px;font-size:25.6px;color:#f4f4f4;letter-spacing:0.138px;">TextMeshPro</span>
<svg style="left:1304.3px;top:809.84px" width="16" height="24" viewBox="0 0 16 24"><path d="M4.1 4.6l7.9 7.4L4.1 19.4" fill="none" stroke="#ececec" stroke-width="3.1" stroke-linecap="round" stroke-linejoin="round"/></svg>
<span id="t68" class="t mi" style="left:1004.5px;top:867.74px;line-height:36px;font-size:25.6px;color:#f4f4f4;letter-spacing:0.189px;">General</span>
<svg style="left:1304.3px;top:873.84px" width="16" height="24" viewBox="0 0 16 24"><path d="M4.1 4.6l7.9 7.4L4.1 19.4" fill="none" stroke="#ececec" stroke-width="3.1" stroke-linecap="round" stroke-linejoin="round"/></svg>
<span id="t69" class="t mi" style="left:1003.5px;top:910.41px;line-height:36px;font-size:25.6px;color:#f4f4f4;letter-spacing:0.33px;">Rendering</span>
<svg style="left:1304.3px;top:916.51px" width="16" height="24" viewBox="0 0 16 24"><path d="M4.1 4.6l7.9 7.4L4.1 19.4" fill="none" stroke="#ececec" stroke-width="3.1" stroke-linecap="round" stroke-linejoin="round"/></svg>
<span id="t70" class="t mi" style="left:1005.5px;top:953.07px;line-height:36px;font-size:25.6px;color:#f4f4f4;letter-spacing:0.366px;">Animation</span>
<svg style="left:1304.3px;top:959.17px" width="16" height="24" viewBox="0 0 16 24"><path d="M4.1 4.6l7.9 7.4L4.1 19.4" fill="none" stroke="#ececec" stroke-width="3.1" stroke-linecap="round" stroke-linejoin="round"/></svg>
<span id="t71" class="t mi" style="left:1005.5px;top:995.74px;line-height:36px;font-size:25.6px;color:#f4f4f4;letter-spacing:-0.181px;">Audio</span>
<svg style="left:1304.3px;top:1001.84px" width="16" height="24" viewBox="0 0 16 24"><path d="M4.1 4.6l7.9 7.4L4.1 19.4" fill="none" stroke="#ececec" stroke-width="3.1" stroke-linecap="round" stroke-linejoin="round"/></svg>
<span id="t72" class="t mi" style="left:1004.5px;top:1038.41px;line-height:36px;font-size:25.6px;color:#f4f4f4;letter-spacing:0.394px;">Sequencing</span>
<svg style="left:1304.3px;top:1044.51px" width="16" height="24" viewBox="0 0 16 24"><path d="M4.1 4.6l7.9 7.4L4.1 19.4" fill="none" stroke="#ececec" stroke-width="3.1" stroke-linecap="round" stroke-linejoin="round"/></svg>
<span id="t73" class="t mi" style="left:1005.5px;top:1081.07px;line-height:36px;font-size:25.6px;color:#f4f4f4;letter-spacing:-0.001px;">Analysis</span>
<svg style="left:1304.3px;top:1087.17px" width="16" height="24" viewBox="0 0 16 24"><path d="M4.1 4.6l7.9 7.4L4.1 19.4" fill="none" stroke="#ececec" stroke-width="3.1" stroke-linecap="round" stroke-linejoin="round"/></svg>
<span id="t74" class="t mi" style="left:1004.5px;top:1123.74px;line-height:36px;font-size:25.6px;color:#f4f4f4;letter-spacing:0.266px;">2D</span>
<svg style="left:1304.3px;top:1129.84px" width="16" height="24" viewBox="0 0 16 24"><path d="M4.1 4.6l7.9 7.4L4.1 19.4" fill="none" stroke="#ececec" stroke-width="3.1" stroke-linecap="round" stroke-linejoin="round"/></svg>
<span id="t75" class="t mi" style="left:1005.5px;top:1166.41px;line-height:36px;font-size:25.6px;color:#f4f4f4;letter-spacing:-0.571px;">AI</span>
<svg style="left:1304.3px;top:1172.51px" width="16" height="24" viewBox="0 0 16 24"><path d="M4.1 4.6l7.9 7.4L4.1 19.4" fill="none" stroke="#ececec" stroke-width="3.1" stroke-linecap="round" stroke-linejoin="round"/></svg>
<span id="t76" class="t mi" style="left:1003.5px;top:1209.08px;line-height:36px;font-size:25.6px;color:#f4f4f4;letter-spacing:0.485px;">UI Toolkit</span>
<svg style="left:1304.3px;top:1215.17px" width="16" height="24" viewBox="0 0 16 24"><path d="M4.1 4.6l7.9 7.4L4.1 19.4" fill="none" stroke="#ececec" stroke-width="3.1" stroke-linecap="round" stroke-linejoin="round"/></svg>
<span id="t77" class="t mi" style="left:1005.5px;top:1251.74px;line-height:36px;font-size:25.6px;color:#f4f4f4;letter-spacing:0.453px;">Visual Scripting</span>
<svg style="left:1304.3px;top:1257.84px" width="16" height="24" viewBox="0 0 16 24"><path d="M4.1 4.6l7.9 7.4L4.1 19.4" fill="none" stroke="#ececec" stroke-width="3.1" stroke-linecap="round" stroke-linejoin="round"/></svg>
<div style="left:1004.9px;top:234.06725px;width:315.5px;height:2.0px;background:#555;"></div>
<div style="left:1004.9px;top:383.40175px;width:315.5px;height:2.0px;background:#555;"></div>
<div style="left:1004.9px;top:447.40225px;width:315.5px;height:2.0px;background:#555;"></div>
<div style="left:1004.9px;top:554.06975px;width:315.5px;height:2.0px;background:#555;"></div>
<div style="left:1004.9px;top:660.73725px;width:315.5px;height:2.0px;background:#555;"></div>
<div style="left:1004.9px;top:724.73775px;width:315.5px;height:2.0px;background:#555;"></div>
<div style="left:1004.9px;top:788.73825px;width:315.5px;height:2.0px;background:#555;"></div>
<div style="left:1004.9px;top:852.73875px;width:315.5px;height:2.0px;background:#555;"></div>
<span id="t78" class="t" style="left:1273px;top:142.4px;line-height:36px;font-size:25.6px;color:#8c8c8c;letter-spacing:2.406px;">⌘M</span>
<div style="left:1338.2px;top:1067.5px;width:484.0px;height:412.5px;background:#2b2b2b;border-radius:11px;border:1.5px solid #5b5b5b;box-shadow:0 0 0 1px rgba(0,0,0,.6),0 10px 24px rgba(0,0,0,.3)"></div>
<div style="left:1345.75px;top:1065px;width:468.5px;height:65.5px;border-radius:33px;overflow:hidden"><div style="left:0;top:12px;width:468.5px;height:42.5px;background:#1b68c3"></div></div>
<span id="t79" class="t mi" style="left:1364.6px;top:1081.07px;line-height:36px;font-size:25.6px;color:#fff;letter-spacing:0.522px;">Profiler</span>
<span id="t80" class="t mi" style="left:1364.6px;top:1123.74px;line-height:36px;font-size:25.6px;color:#f4f4f4;letter-spacing:0.301px;">Profiler (Standalone Process)</span>
<span id="t81" class="t mi" style="left:1364.6px;top:1166.41px;line-height:36px;font-size:25.6px;color:#f4f4f4;letter-spacing:0.251px;">Frame Debugger</span>
<span id="t82" class="t mi" style="left:1364.6px;top:1209.08px;line-height:36px;font-size:25.6px;color:#f4f4f4;letter-spacing:0.335px;">Physics Debugger</span>
<span id="t83" class="t mi" style="left:1364.6px;top:1273.08px;line-height:36px;font-size:25.6px;color:#f4f4f4;letter-spacing:0.736px;">Import Activity</span>
<span id="t84" class="t mi" style="left:1365.6px;top:1315.74px;line-height:36px;font-size:25.6px;color:#f4f4f4;letter-spacing:0.097px;">Code Coverage</span>
<span id="t85" class="t mi" style="left:1364.6px;top:1358.41px;line-height:36px;font-size:25.6px;color:#f4f4f4;letter-spacing:0.366px;">Profile Analyzer</span>
<span id="t86" class="t mi" style="left:1364.6px;top:1422.41px;line-height:36px;font-size:25.6px;color:#6e6e6e;letter-spacing:0.3px;">Rendering Debugger</span>
<div style="left:1365px;top:1256.9752500000002px;width:430px;height:2.0px;background:#555;"></div>
<div style="left:1365px;top:1406.3097500000001px;width:430px;height:2.0px;background:#555;"></div>
<div style="left:1342.25px;top:1061.5px;width:475.5px;height:72.5px;border-radius:37px;border:7px solid #fca906"></div>
<span id="t87" class="t" style="left:1754px;top:1081.07px;line-height:36px;font-size:25.6px;color:#fff;letter-spacing:1.906px;">⌘7</span>
</div>
</body></html>
